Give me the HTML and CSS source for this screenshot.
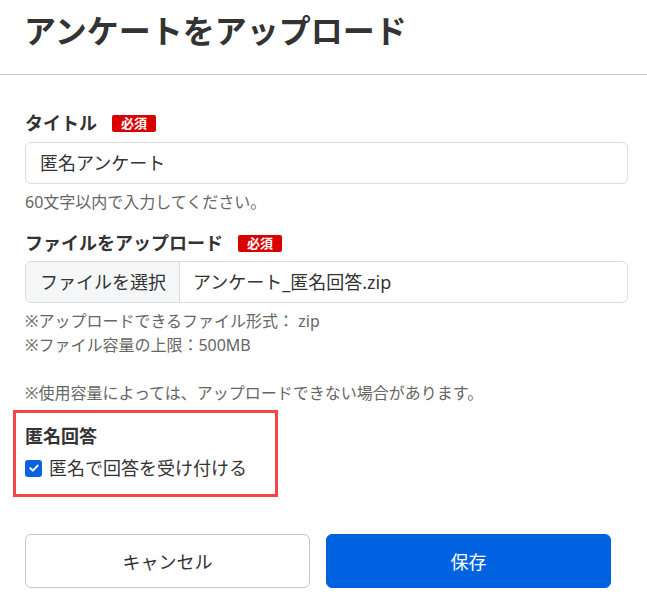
FILE: index.html
```html
<!DOCTYPE html>
<html lang="ja">
<head>
<meta charset="utf-8">
<title>アンケートをアップロード</title>
<link rel="stylesheet" href="styles.css">
</head>
<body>
<header class="header">
  <h1 class="title">アンケートをアップロード</h1>
</header>
<main class="form">
  <div class="field field-title">
    <div class="label-row"><span class="label">タイトル</span><span class="badge">必須</span></div>
    <div class="input">匿名アンケート</div>
    <p class="help">60文字以内で入力してください。</p>
  </div>
  <div class="field field-file">
    <div class="label-row"><span class="label">ファイルをアップロード</span><span class="badge">必須</span></div>
    <div class="file-input">
      <span class="file-button">ファイルを選択</span>
      <span class="file-name">アンケート_匿名回答.zip</span>
    </div>
    <div class="notes">
      <p>※アップロードできるファイル形式： zip</p>
      <p>※ファイル容量の上限：500MB</p>
      <p class="notes-gap">※使用容量によっては、アップロードできない場合があります。</p>
    </div>
  </div>
  <section class="anon-box">
    <div class="label">匿名回答</div>
    <label class="check-row">
      <span class="checkbox"><svg width="12" height="12" viewBox="0 0 12 12"><path d="M2.3 6.2 L4.9 8.6 L9.7 3.6" fill="none" stroke="#fff" stroke-width="2" stroke-linecap="round" stroke-linejoin="round"/></svg></span>
      <span class="check-text">匿名で回答を受け付ける</span>
    </label>
  </section>
  <div class="actions">
    <button class="btn btn-cancel">キャンセル</button>
    <button class="btn btn-save">保存</button>
  </div>
</main>
</body>
</html>
```
FILE: styles.css
```css
* { box-sizing: border-box; }
html, body { margin: 0; padding: 0; background: #fff; }
body {
  font-family: "Noto Sans", "Noto Sans CJK JP", sans-serif;
  color: #333;
  width: 647px;
}
p { margin: 0; }
.header {
  height: 75px;
  border-bottom: 1px solid #c6c6c6;
  padding: 7px 0 0 24px;
}
.title {
  margin: 0;
  font-size: 32px;
  font-weight: 700;
  line-height: 48px;
  color: #333;
}
.form {
  padding: 36px 19px 0 25px;
}
.label-row {
  display: flex;
  align-items: center;
  height: 24px;
}
.label {
  font-size: 18px;
  font-weight: 700;
  line-height: 24px;
  color: #333;
}
.badge {
  margin-left: 15px;
  background: #d90000;
  color: #fff;
  font-size: 13px;
  font-weight: 700;
  line-height: 17px;
  height: 17px;
  padding: 0 9px;
  border-radius: 2px;
}
.input {
  margin-top: 7px;
  height: 42px;
  border: 1px solid #dcdcdc;
  border-radius: 6px;
  padding-left: 14px;
  font-size: 18px;
  line-height: 40px;
  color: #333;
}
.help {
  margin-top: 6px;
  font-size: 16px;
  line-height: 24px;
  color: #666;
}
.field-file { margin-top: 17px; }
.file-input {
  margin-top: 6px;
  height: 42px;
  border: 1px solid #dcdcdc;
  border-radius: 6px;
  display: flex;
  overflow: hidden;
  font-size: 18px;
  line-height: 40px;
}
.file-button {
  width: 154px;
  background: #f5f6f8;
  border-right: 1px solid #dcdcdc;
  padding-left: 14px;
  color: #333;
}
.file-name {
  padding-left: 13px;
  color: #333;
}
.notes {
  margin-top: 6px;
  font-size: 16px;
  line-height: 24px;
  color: #666;
}
.notes-gap { margin-top: 24px; }
.anon-box {
  margin: 5px 0 0 -12px;
  width: 265px;
  border: 3px solid #f24646;
  padding: 11px 9px 14px 9px;
}
.check-row {
  display: flex;
  align-items: center;
  margin-top: 8px;
  gap: 7px;
}
.checkbox {
  width: 17px;
  height: 17px;
  border-radius: 3px;
  background: #0a63dd;
  display: flex;
  align-items: center;
  justify-content: center;
}
.check-text {
  font-size: 18px;
  line-height: 24px;
  color: #333;
}
.actions {
  margin-top: 37px;
  display: flex;
  gap: 16px;
  width: 586px;
}
.btn {
  flex: 1;
  height: 54px;
  border-radius: 6px;
  font-family: "Noto Sans", "Noto Sans CJK JP", sans-serif;
  font-size: 18px;
  cursor: pointer;
}
.btn-cancel {
  background: #fff;
  border: 1px solid #c6c6c6;
  color: #333;
}
.btn-save {
  background: #0062e0;
  border: 1px solid #0062e0;
  color: #fff;
}
```
